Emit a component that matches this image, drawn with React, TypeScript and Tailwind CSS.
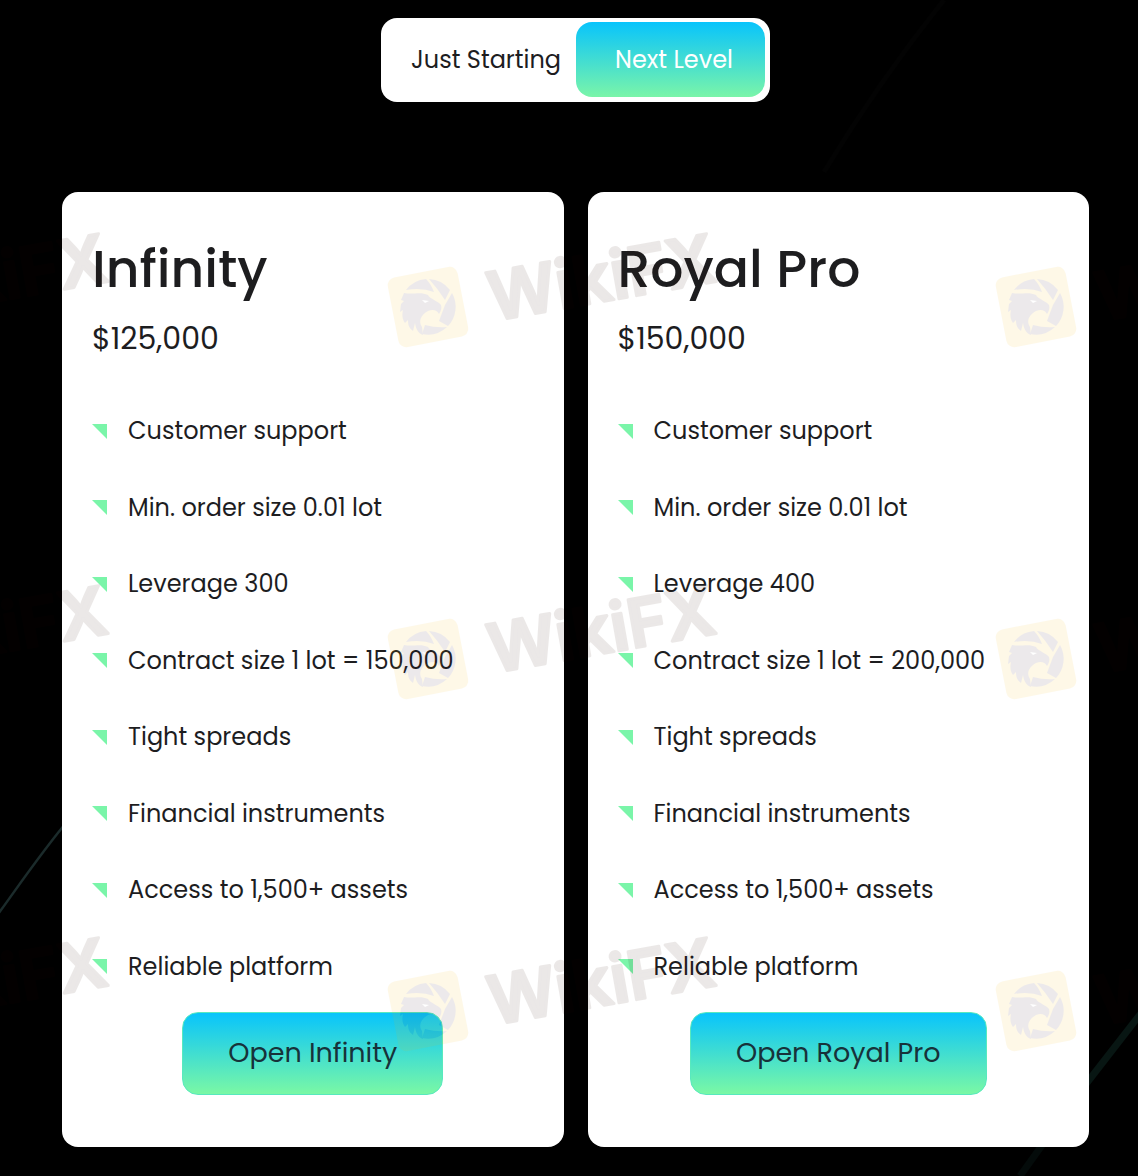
import React, { useState } from 'react';

interface Plan {
  name: string;
  deposit: string;
  leverage: number;
  contractSize: string;
}

const plans: Plan[] = [
  { name: 'Infinity', deposit: '$125,000', leverage: 300, contractSize: '150,000' },
  { name: 'Royal Pro', deposit: '$150,000', leverage: 400, contractSize: '200,000' },
];

// Thin diagonal lines behind the cards
function Backdrop() {
  return (
    <svg className="pointer-events-none absolute inset-0 h-full w-full" aria-hidden="true">
      <path d="M-4 917 C 20 884, 40 854, 70 818" stroke="#1b2b2b" strokeWidth="2.5" fill="none" />
      <path d="M1142 1012 L1086 1084" stroke="#081613" strokeWidth="7" fill="none" />
      <path d="M1086 1084 L1020 1176" stroke="#040b0a" strokeWidth="7" fill="none" />
      <path d="M944 0 Q 880 80 824 172" stroke="#030303" strokeWidth="5" fill="none" />
    </svg>
  );
}

// Repeating brand mark laid over the whole page
function Watermark() {
  return (
    <svg className="pointer-events-none absolute inset-0 h-full w-full" aria-hidden="true">
      <defs>
        <g id="mark" opacity="0.09">
          <rect x="-35.5" y="-35.5" width="71" height="71" rx="8" fill="#f8b800" transform="rotate(-11)" />
          <g fill="#3c1e30">
            <path d="M-22 -17 A28 28 0 0 1 -2 -28 Q3 -23 6 -15 Q-7 -20 -22 -17 Z" />
            <path d="M1 -28 A28 28 0 0 1 22 -17 L17 -7 Q10 -18 1 -28 Z" />
            <path d="M24 -14 A28 28 0 0 1 20 19 L11 14 L17 -2 Z" />
            <path d="M19 20 A28 28 0 0 1 -6 27 L-3 18 Q8 21 19 20 Z" />
            <path d="M-24 -14 C-14 -12 -8 -16 0 -12 C2 -8 10 -6 13 -2 C14 1 13 4 11 7 C9 3 5 2 0 4 C-7 8 -10 14 -6 20 L-5 28 C-10 26 -12 22 -13 16 L-15 24 C-19 21 -20 18 -20 13 L-23 16 C-26 12 -26 7 -25 3 L-28 5 L-27 -3 L-24 -6 L-27 -7 Z" />
          </g>
          <path d="M-6 -7 L1 -6 L-3 -4 Z" fill="#ffffff" />
        </g>
      </defs>
      {[-180, 428, 1036].map((x) =>
        [307, 659, 1011].map((y) => (
          <g key={`${x}-${y}`} transform={`translate(${x} ${y})`}>
            <use href="#mark" />
            <g opacity="0.09" transform="rotate(-10)">
              <text
                x="61"
                y="25"
                fontSize="67"
                fontWeight="600"
                fontFamily="Inter, sans-serif"
                fill="#2a0a00"
                stroke="#2a0a00"
                strokeWidth="3"
                strokeLinejoin="round"
              >
                WikiFX
              </text>
            </g>
          </g>
        ))
      )}
    </svg>
  );
}

function PlanCard({ plan }: { plan: Plan }) {
  const features = [
    'Customer support',
    'Min. order size 0.01 lot',
    `Leverage ${plan.leverage}`,
    `Contract size 1 lot = ${plan.contractSize}`,
    'Tight spreads',
    'Financial instruments',
    'Access to 1,500+ assets',
    'Reliable platform',
  ];

  return (
    <section className="flex flex-1 flex-col rounded-2xl bg-white px-[30px] pt-[42px] pb-[52px]">
      <h2 className="text-[52px] leading-[70px] font-medium">{plan.name}</h2>
      <p className="text-[30px] leading-[70px]">{plan.deposit}</p>
      <ul className="mt-[19px] grid h-[612px] auto-rows-fr text-2xl">
        {features.map((feature) => (
          <li key={feature} className="flex items-center gap-[21px]">
            <svg width="15" height="15" viewBox="0 0 15 15" className="shrink-0" aria-hidden="true">
              <path d="M0 0 H15 V15 Z" fill="#7af5a9" />
            </svg>
            <span>{feature}</span>
          </li>
        ))}
      </ul>
      <button
        type="button"
        className="mt-[7px] h-[83px] self-center rounded-2xl border border-[#58e9be] bg-linear-to-b/srgb from-[#08c4fc] to-[#7af8a5] px-[45px] text-[27px] text-[#17323a]"
      >
        Open {plan.name}
      </button>
    </section>
  );
}

export default function App() {
  const [activeTab, setActiveTab] = useState<'starting' | 'next'>('next');
  const activeCls = 'bg-linear-to-b/srgb from-[#08c4fc] to-[#7af5a9] text-white';

  return (
    <div className="relative min-h-screen overflow-hidden bg-black font-[Poppins,Inter,sans-serif] text-[#1d1d1f]">
      <Backdrop />
      <main className="relative flex flex-col items-center pt-[18px] pr-[49px] pb-[29px] pl-[62px]">
        <div className="flex h-[84px] rounded-2xl bg-white px-[5px] pt-1 pb-[5px] text-2xl">
          <button
            type="button"
            onClick={() => setActiveTab('starting')}
            className={`rounded-2xl pr-[15px] pl-[25px] ${activeTab === 'starting' ? activeCls : ''}`}
          >
            Just Starting
          </button>
          <button
            type="button"
            onClick={() => setActiveTab('next')}
            className={`rounded-2xl pr-8 pl-[39px] ${activeTab === 'next' ? activeCls : ''}`}
          >
            Next Level
          </button>
        </div>
        <div className="mt-[90px] flex w-full gap-6">
          {plans.map((plan) => (
            <PlanCard key={plan.name} plan={plan} />
          ))}
        </div>
      </main>
      <Watermark />
    </div>
  );
}
